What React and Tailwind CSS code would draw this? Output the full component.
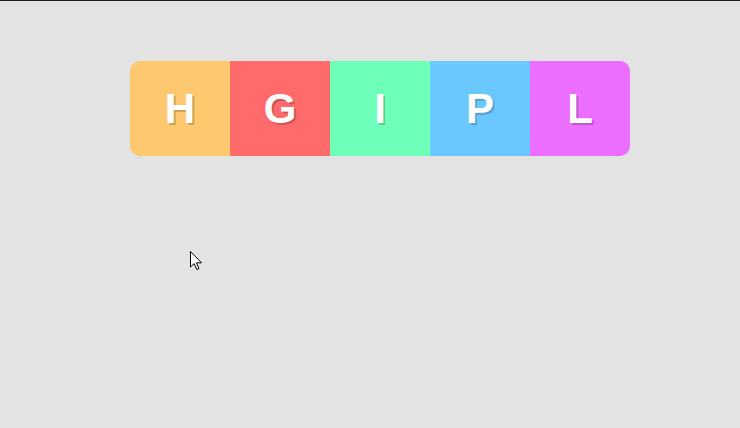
import React from 'react';

const tiles = [
  { letter: 'H', bg: 'bg-[#fec86e]' },
  { letter: 'G', bg: 'bg-[#ff6b6b]' },
  { letter: 'I', bg: 'bg-[#6effb8]' },
  { letter: 'P', bg: 'bg-[#6bc8fe]' },
  { letter: 'L', bg: 'bg-[#eb6efe]' },
];

export default function App() {
  return (
    <div className="relative w-full h-[428px] bg-[#e3e3e3] border-t border-[#1c1b24] overflow-hidden font-['Liberation_Sans',Arial,sans-serif]">
      <div className="pt-[60px] pl-[130px]">
        {/* letter strip */}
        <div className="flex w-[500px] h-[95px] rounded-[10px] overflow-hidden">
          {tiles.map((t) => (
            <div
              key={t.letter}
              className={`flex-1 flex items-center justify-center ${t.bg}`}
            >
              <span className="text-white font-bold text-[42px] leading-none [text-shadow:2px_2px_0_rgba(0,0,0,0.2)]">
                {t.letter}
              </span>
            </div>
          ))}
        </div>
      </div>

      {/* mouse pointer */}
      <svg
        className="absolute left-[190px] top-[250px]"
        width="13"
        height="20"
        viewBox="0 0 13 20"
      >
        <path
          d="M0.5 0.5 L0.5 16 L4.2 12.6 L6.8 18.6 L9 17.6 L6.5 11.8 L11.5 11.8 Z"
          fill="#fff"
          stroke="#000"
          strokeWidth="1"
          strokeLinejoin="miter"
        />
      </svg>
    </div>
  );
}
